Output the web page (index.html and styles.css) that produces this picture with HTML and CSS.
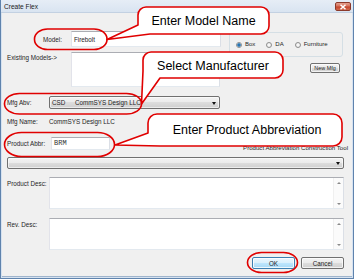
FILE: index.html
```html
<!DOCTYPE html>
<html>
<head>
<meta charset="utf-8">
<link rel="stylesheet" href="styles.css">
</head>
<body>
<div class="stage">
  <div class="window">
    <div class="titlebar">
      <span class="title">Create Flex</span>
      <span class="close"><svg width="8" height="6" viewBox="0 0 8 6"><path d="M1.5 0.8 L6.5 5.2 M6.5 0.8 L1.5 5.2" stroke="#fff" stroke-width="1.5" fill="none"/></svg></span>
    </div>
    <div class="client">
      <div class="top">
        <div class="top-left">
          <span class="lbl lbl-model">Model:</span>
          <div class="textbox model-box">Firebolt</div>
          <span class="lbl lbl-existing">Existing Models-&gt;</span>
          <div class="listbox"></div>
        </div>
        <div class="top-right">
          <div class="groupbox">
            <span class="radio checked"></span><span class="rlabel">Box</span>
            <span class="radio"></span><span class="rlabel">DA</span>
            <span class="radio"></span><span class="rlabel">Furniture</span>
          </div>
          <div class="btn btn-new">New Mfg</div>
        </div>
      </div>

      <div class="row row-mfgabv">
        <span class="lbl">Mfg Abv:</span>
        <div class="combo combo-mfg"><span class="c-abv">CSD</span><span class="c-name">CommSYS Design LLC</span><span class="arrow"></span></div>
      </div>

      <div class="row row-mfgname">
        <span class="lbl">Mfg Name:</span>
        <span class="value">CommSYS Design LLC</span>
      </div>

      <div class="row-abbr">
        <span class="lbl lbl-abbr">Product Abbr:</span>
        <div class="textbox abbr-box">BRM</div>
        <span class="tool-lbl">Product Abbreviation Construction Tool</span>
      </div>

      <div class="combo combo-full"><span class="arrow"></span></div>

      <div class="row row-desc row-pdesc">
        <span class="lbl">Product Desc:</span>
        <div class="textarea"><div class="scroll"><span class="up"></span><span class="down"></span></div></div>
      </div>

      <div class="row row-desc row-rdesc">
        <span class="lbl">Rev. Desc:</span>
        <div class="textarea"><div class="scroll"><span class="up"></span><span class="down"></span></div></div>
      </div>

      <div class="buttons">
        <div class="btn btn-ok">OK</div>
        <div class="btn btn-cancel">Cancel</div>
      </div>
    </div>
  </div>

  <svg class="annotations" width="354" height="279" viewBox="0 0 354 279">
    <g fill="none" stroke="#e00000" stroke-width="1.6">
      <rect x="34.5" y="29" width="72.5" height="20.5" rx="13" ry="10"/>
      <rect x="4.5" y="93.5" width="137" height="20.5" rx="15" ry="10"/>
      <rect x="4.5" y="132.5" width="110" height="24" rx="17" ry="12"/>
      <rect x="247.5" y="252.5" width="50" height="20" rx="14" ry="10"/>
    </g>
    <g fill="#fff" stroke="#e00000" stroke-width="1.6" stroke-linejoin="round">
      <path d="M146 7 H261 A8 8 0 0 1 269 15 V26 A8 8 0 0 1 261 34 H150 L107 39.5 L138 25 V15 A8 8 0 0 1 146 7 Z"/>
      <path d="M151 52 H275 A8 8 0 0 1 283 60 V70 A8 8 0 0 1 275 78 H160 L141.5 104 L143 71 V60 A8 8 0 0 1 151 52 Z"/>
      <path d="M157 114 H333 A9 9 0 0 1 342 123 V137 A9 9 0 0 1 333 146 H160 L115 145 L148 133 V123 A9 9 0 0 1 157 114 Z"/>
    </g>
    <g class="callout-text" text-anchor="middle">
      <text x="203.5" y="25">Enter Model Name</text>
      <text x="213" y="69.5">Select Manufacturer</text>
      <text x="247" y="134">Enter Product Abbreviation</text>
    </g>
  </svg>
</div>
</body>
</html>
```

FILE: styles.css
```css
* { box-sizing: border-box; }

html, body {
  margin: 0;
  padding: 0;
  background: #ffffff;
}

.stage {
  position: relative;
  width: 354px;
  height: 279px;
  overflow: hidden;
}

.window {
  width: 354px;
  height: 279px;
  border: 1px solid #5f83ad;
  border-top: none;
  background: #d6e2f0;
  display: flex;
  flex-direction: column;
  font-family: "Liberation Sans", Arial, sans-serif;
  font-size: 6.3px;
  line-height: 7px;
  color: #1e1e1e;
}

.titlebar {
  height: 13px;
  flex: none;
  display: flex;
  align-items: flex-start;
  background: linear-gradient(#e6edf6, #d9e4f1);
  border-bottom: 1px solid #c3d1e2;
}

.title {
  margin: 3px 0 0 3px;
  font-size: 6.6px;
  color: #1a1a1a;
}

.close {
  margin: 2px 2px 0 auto;
  width: 16px;
  height: 9px;
  border: 1px solid #8c3a2b;
  border-radius: 2px;
  background: linear-gradient(#e5a08f 0%, #d4705a 45%, #c5452c 55%, #d06a4f 100%);
  display: flex;
  align-items: center;
  justify-content: center;
}

.client {
  flex: 1;
  margin: 0 1px 1px 1px;
  background: #f0f0f0;
  padding-top: 18px;
  border-bottom: 1px solid #9fb4cc;
}

/* top section */
.top {
  display: flex;
  gap: 8px;
  padding-left: 5px;
}

.top-left {
  display: grid;
  grid-template-columns: 64px 150px;
  grid-template-rows: 16px 35px;
  row-gap: 5px;
}

.lbl-model {
  justify-self: end;
  align-self: center;
  padding-right: 9px;
}

.lbl-existing {
  align-self: start;
  padding-top: 2px;
}

.textbox {
  background: #fff;
  border: 1px solid;
  border-color: #abadb3 #dbdfe6 #e3e9ef #e2e3ea;
  display: flex;
  align-items: center;
  padding-left: 2px;
}

.model-box {
  color: #222;
}

.listbox {
  width: 149px;
  background: #fff;
  border: 1px solid;
  border-color: #abadb3 #dbdfe6 #e3e9ef #e2e3ea;
}

.top-right {
  display: flex;
  flex-direction: column;
}

.groupbox {
  margin-top: 1px;
  width: 114px;
  height: 25px;
  border: 1px solid #d5dfe5;
  border-radius: 3px;
  display: flex;
  align-items: center;
  padding-left: 6px;
  font-size: 6px;
}

.radio {
  width: 6px;
  height: 6px;
  border-radius: 50%;
  border: 1px solid #8e8f8f;
  background: radial-gradient(#ffffff, #e2e2e2);
  margin-right: 3px;
  flex: none;
}

.radio.checked {
  background: radial-gradient(circle, #1d5f9a 0, #3a8ac8 1.5px, #e8eef4 2.2px);
}

.rlabel {
  margin-right: 11px;
}

.btn {
  display: flex;
  align-items: center;
  justify-content: center;
  border: 1px solid #707070;
  border-radius: 2px;
  background: linear-gradient(#f2f2f2 0%, #ebebeb 50%, #dddddd 50%, #cfcfcf 100%);
  box-shadow: inset 0 0 0 1px rgba(255,255,255,0.7);
  color: #1e1e1e;
}

.btn-new {
  align-self: flex-end;
  margin-top: 6px;
  margin-right: 3px;
  width: 30px;
  height: 10px;
  font-size: 5.4px;
}

/* rows */
.row {
  display: grid;
  grid-template-columns: 42px auto;
  padding-left: 5px;
  align-items: center;
}

.row-mfgabv {
  margin-top: 9px;
  height: 13px;
  grid-template-columns: 42px 171px;
}

.combo {
  position: relative;
  border: 1px solid #707070;
  border-radius: 2px;
  background: linear-gradient(#f2f2f2 0%, #ebebeb 50%, #dddddd 50%, #cfcfcf 100%);
  box-shadow: inset 0 0 0 1px rgba(255,255,255,0.6);
  display: flex;
  align-items: center;
}

.combo-mfg {
  height: 13px;
  padding-left: 2px;
}

.c-abv {
  width: 23px;
}

.arrow {
  position: absolute;
  right: 3px;
  top: 50%;
  margin-top: -1px;
  width: 0;
  height: 0;
  border-top: 3px solid #111;
  border-left: 2.5px solid transparent;
  border-right: 2.5px solid transparent;
}

.row-mfgname {
  margin-top: 8px;
  height: 9px;
}

.row-abbr {
  margin-top: 11px;
  display: flex;
  align-items: center;
  padding-left: 5px;
  padding-right: 4px;
  height: 13px;
}

.lbl-abbr {
  width: 44px;
  flex: none;
}

.abbr-box {
  width: 59px;
  height: 13px;
  font-family: "Liberation Mono", "Courier New", monospace;
  font-size: 7px;
  color: #333;
}

.tool-lbl {
  margin-left: auto;
  align-self: flex-end;
  font-size: 6.1px;
  line-height: 6px;
  margin-bottom: -1px;
}

.combo-full {
  margin-top: 7px;
  margin-left: 5px;
  width: 337px;
  height: 12px;
}

.row-desc {
  grid-template-columns: 42px 295px;
  align-items: start;
}

.row-desc .lbl {
  padding-top: 3px;
}

.row-pdesc {
  margin-top: 8px;
}

.row-rdesc {
  margin-top: 9px;
}

.textarea {
  height: 32px;
  background: #fff;
  border: 1px solid;
  border-color: #abadb3 #dbdfe6 #e3e9ef #e2e3ea;
  display: flex;
  justify-content: flex-end;
}

.scroll {
  width: 10px;
  height: 100%;
  background: #fbfbfb;
  border-left: 1px solid #f0f0f0;
  display: flex;
  flex-direction: column;
  justify-content: space-between;
  align-items: center;
  padding: 4px 0 3px;
}

.up, .down {
  width: 0;
  height: 0;
  border-left: 2px solid transparent;
  border-right: 2px solid transparent;
}

.up { border-bottom: 2px solid #8a8a8a; }
.down { border-top: 2px solid #8a8a8a; }

.buttons {
  margin-top: 7px;
  display: flex;
  justify-content: flex-end;
  gap: 6px;
  padding-right: 8px;
}

.btn-ok, .btn-cancel {
  width: 43px;
  height: 12px;
}

.btn-ok {
  border-color: #3c7fb1;
  background: linear-gradient(#eaf6fd 0%, #d9f0fc 50%, #bee6fd 50%, #a7d9f5 100%);
  box-shadow: inset 0 0 0 1px rgba(255,255,255,0.8);
}

.annotations {
  position: absolute;
  left: 0;
  top: 0;
  pointer-events: none;
}

.callout-text {
  font-family: "Liberation Sans", Arial, sans-serif;
  font-size: 12.5px;
  fill: #000;
}
```
